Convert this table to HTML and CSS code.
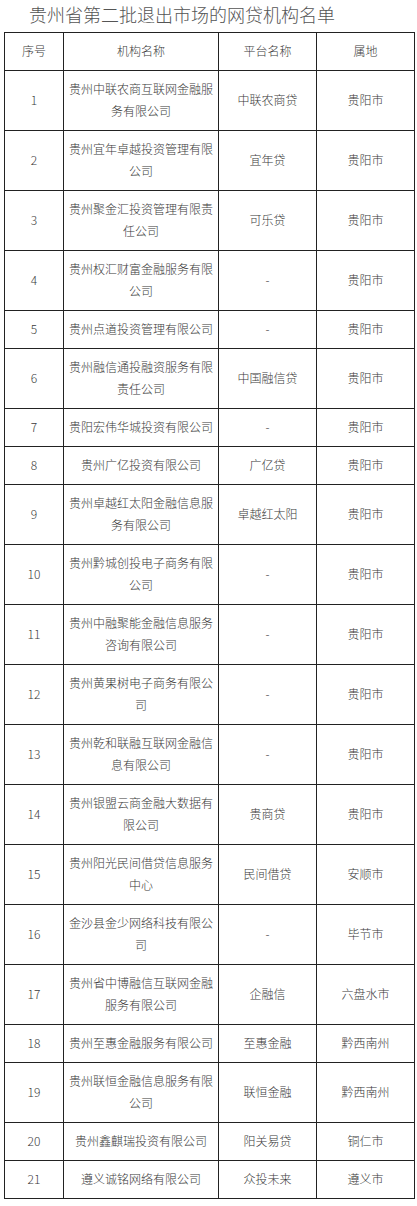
FILE: index.html
```html
<!DOCTYPE html>
<html lang="zh-CN">
<head>
<meta charset="utf-8">
<title>贵州省第二批退出市场的网贷机构名单</title>
<link rel="stylesheet" href="styles.css">
</head>
<body>
<h1 class="title">贵州省第二批退出市场的网贷机构名单</h1>
<table class="list">
<colgroup><col class="c1"><col class="c2"><col class="c3"><col class="c4"></colgroup>
<thead>
<tr><th>序号</th><th>机构名称</th><th>平台名称</th><th>属地</th></tr>
</thead>
<tbody>
<tr><td>1</td><td>贵州中联农商互联网金融服务有限公司</td><td>中联农商贷</td><td>贵阳市</td></tr>
<tr><td>2</td><td>贵州宜年卓越投资管理有限公司</td><td>宜年贷</td><td>贵阳市</td></tr>
<tr><td>3</td><td>贵州聚金汇投资管理有限责任公司</td><td>可乐贷</td><td>贵阳市</td></tr>
<tr><td>4</td><td>贵州权汇财富金融服务有限公司</td><td>-</td><td>贵阳市</td></tr>
<tr><td>5</td><td>贵州点道投资管理有限公司</td><td>-</td><td>贵阳市</td></tr>
<tr><td>6</td><td>贵州融信通投融资服务有限责任公司</td><td>中国融信贷</td><td>贵阳市</td></tr>
<tr><td>7</td><td>贵阳宏伟华城投资有限公司</td><td>-</td><td>贵阳市</td></tr>
<tr><td>8</td><td>贵州广亿投资有限公司</td><td>广亿贷</td><td>贵阳市</td></tr>
<tr><td>9</td><td>贵州卓越红太阳金融信息服务有限公司</td><td>卓越红太阳</td><td>贵阳市</td></tr>
<tr><td>10</td><td>贵州黔城创投电子商务有限公司</td><td>-</td><td>贵阳市</td></tr>
<tr><td>11</td><td>贵州中融聚能金融信息服务咨询有限公司</td><td>-</td><td>贵阳市</td></tr>
<tr><td>12</td><td>贵州黄果树电子商务有限公司</td><td>-</td><td>贵阳市</td></tr>
<tr><td>13</td><td>贵州乾和联融互联网金融信息有限公司</td><td>-</td><td>贵阳市</td></tr>
<tr><td>14</td><td>贵州银盟云商金融大数据有限公司</td><td>贵商贷</td><td>贵阳市</td></tr>
<tr><td>15</td><td>贵州阳光民间借贷信息服务中心</td><td>民间借贷</td><td>安顺市</td></tr>
<tr><td>16</td><td>金沙县金少网络科技有限公司</td><td>-</td><td>毕节市</td></tr>
<tr><td>17</td><td>贵州省中博融信互联网金融服务有限公司</td><td>企融信</td><td>六盘水市</td></tr>
<tr><td>18</td><td>贵州至惠金融服务有限公司</td><td>至惠金融</td><td>黔西南州</td></tr>
<tr><td>19</td><td>贵州联恒金融信息服务有限公司</td><td>联恒金融</td><td>黔西南州</td></tr>
<tr><td>20</td><td>贵州鑫麒瑞投资有限公司</td><td>阳关易贷</td><td>铜仁市</td></tr>
<tr><td>21</td><td>遵义诚铭网络有限公司</td><td>众投未来</td><td>遵义市</td></tr>
</tbody>
</table>
</body>
</html>
```
FILE: styles.css
```css
html, body {
  margin: 0;
  padding: 0;
  background: #fff;
}
body {
  font-family: "Noto Sans CJK SC", "Noto Sans", sans-serif;
  color: #333;
}
.title {
  margin: 0;
  height: 32px;
  padding-left: 29px;
  font-size: 18px;
  font-weight: 300;
  line-height: 28px;
  color: #555;
}
.list {
  margin-left: 4px;
  border-collapse: collapse;
  table-layout: fixed;
  width: 410px;
}
.c1 { width: 59px; }
.c2 { width: 155px; }
.c3 { width: 98px; }
.c4 { width: 98px; }
.list th, .list td {
  border: 1px solid #222;
  padding: 7px 5px 8px;
  font-size: 12px;
  line-height: 22px;
  font-weight: 300;
  text-align: center;
  vertical-align: middle;
  color: #3a3a3a;
  word-break: break-all;
}
```
